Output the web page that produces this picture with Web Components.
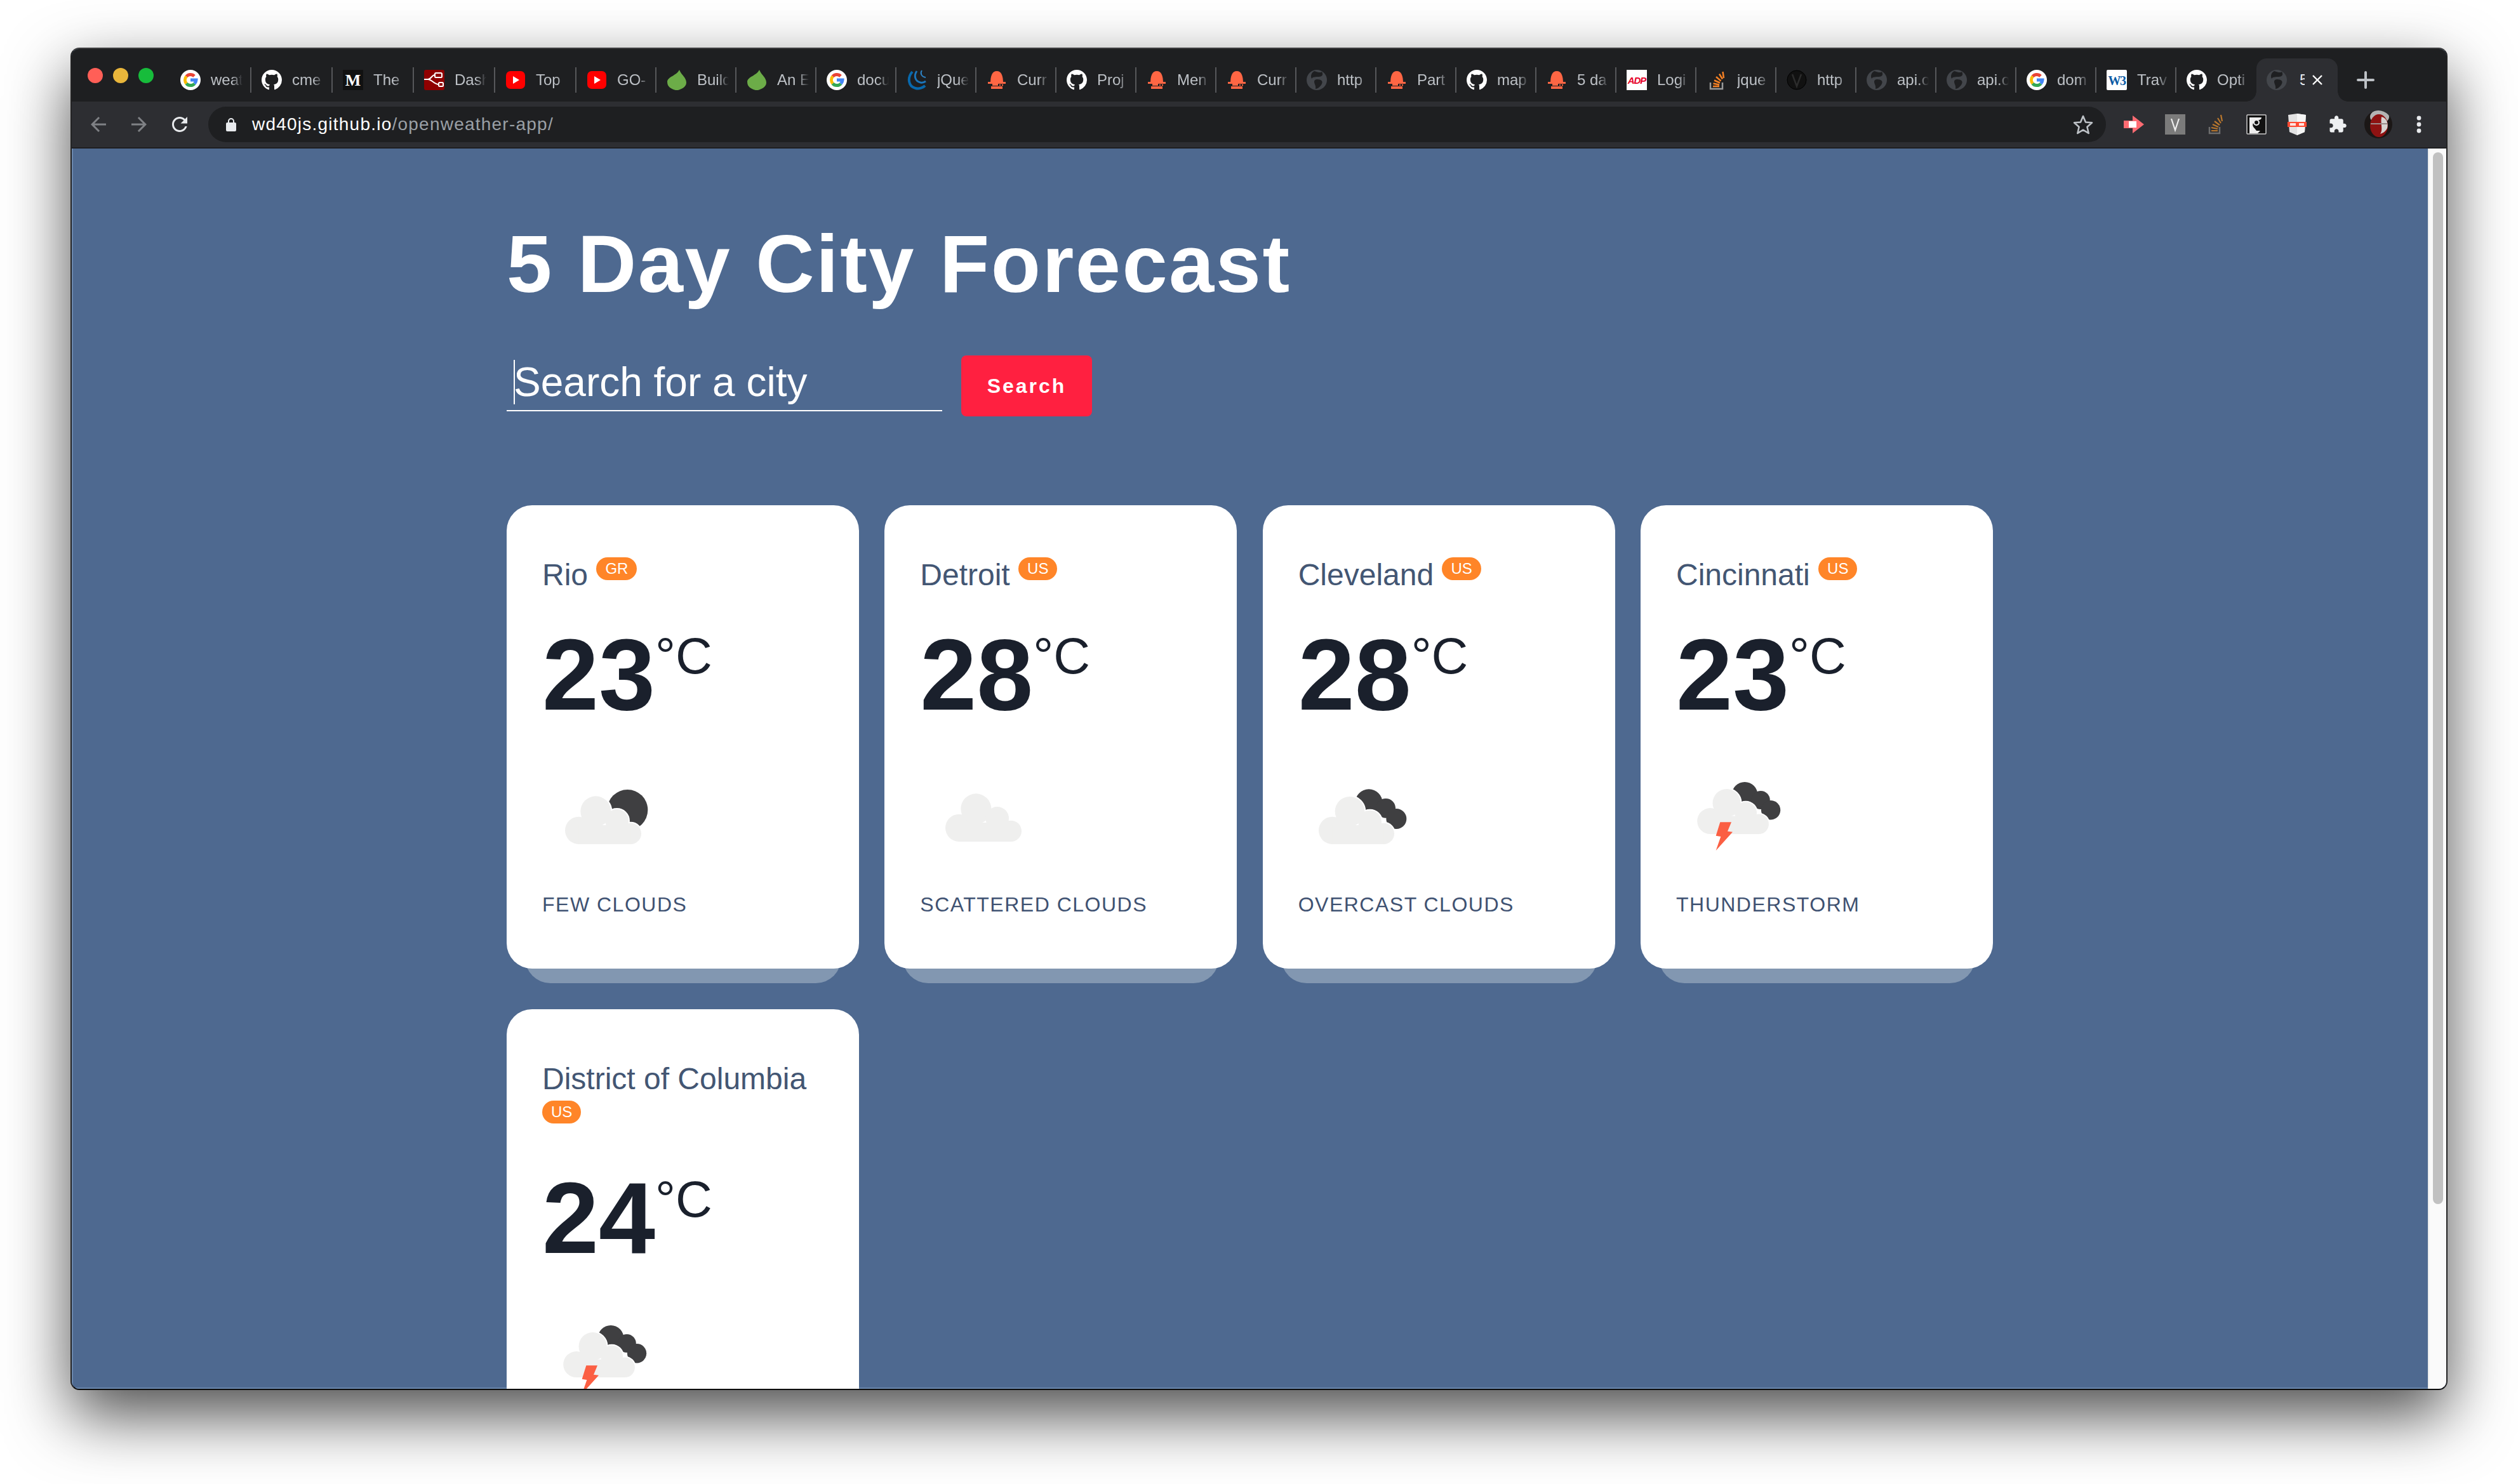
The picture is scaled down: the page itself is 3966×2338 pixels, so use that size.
<!DOCTYPE html>
<html>
<head>
<meta charset="utf-8">
<title>5 Day City Forecast</title>
<style>
  html, body { margin: 0; height: 100%; background: #fff; overflow: hidden; }
  body { padding: 75px 0 0 111px; box-sizing: border-box; font-family: "Liberation Sans", Arial, sans-serif; }
</style>
</head>
<body>
<browser-window>
  <tab-strip slot="tabs">
    <browser-tab wide icon="google">weat</browser-tab>
    <browser-tab wide icon="github">cme</browser-tab>
    <browser-tab wide icon="medium">The</browser-tab>
    <browser-tab wide icon="nodered">Dash</browser-tab>
    <browser-tab wide icon="youtube">Top</browser-tab>
    <browser-tab icon="youtube">GO-</browser-tab>
    <browser-tab icon="leaf">Build</browser-tab>
    <browser-tab icon="leaf">An E</browser-tab>
    <browser-tab icon="google">docu</browser-tab>
    <browser-tab icon="jquery">jQue</browser-tab>
    <browser-tab icon="helmet">Curr</browser-tab>
    <browser-tab icon="github">Proj</browser-tab>
    <browser-tab icon="helmet">Men</browser-tab>
    <browser-tab icon="helmet">Curr</browser-tab>
    <browser-tab icon="globe">http</browser-tab>
    <browser-tab icon="helmet">Part</browser-tab>
    <browser-tab icon="github">map</browser-tab>
    <browser-tab icon="helmet">5 da</browser-tab>
    <browser-tab icon="adp">Logi</browser-tab>
    <browser-tab icon="stack">jque</browser-tab>
    <browser-tab icon="vcircle">http</browser-tab>
    <browser-tab icon="globe">api.o</browser-tab>
    <browser-tab icon="globe">api.o</browser-tab>
    <browser-tab icon="google">dom</browser-tab>
    <browser-tab icon="w3">Trav</browser-tab>
    <browser-tab icon="github" nosep>Opti</browser-tab>
    <browser-tab active icon="globe">5 Day</browser-tab>
  </tab-strip>
  <browser-toolbar slot="toolbar" host-part="wd40js.github.io" path-part="/openweather-app/"></browser-toolbar>
  <forecast-page slot="page">
    <weather-card country="GR" temp="23" desc="FEW CLOUDS" icon="few">Rio</weather-card>
    <weather-card country="US" temp="28" desc="SCATTERED CLOUDS" icon="scattered">Detroit</weather-card>
    <weather-card country="US" temp="28" desc="OVERCAST CLOUDS" icon="overcast">Cleveland</weather-card>
    <weather-card country="US" temp="23" desc="THUNDERSTORM" icon="thunder">Cincinnati</weather-card>
    <weather-card country="US" temp="24" icon="thunder">District of Columbia</weather-card>
  </forecast-page>
</browser-window>

<script>
const GITHUB_PATH = "M8 0C3.58 0 0 3.58 0 8c0 3.54 2.29 6.53 5.47 7.59.4.07.55-.17.55-.38 0-.19-.01-.82-.01-1.49-2.01.37-2.53-.49-2.69-.94-.09-.23-.48-.94-.82-1.13-.28-.15-.68-.52-.01-.53.63-.01 1.08.58 1.23.82.72 1.21 1.87.87 2.33.66.07-.52.28-.87.51-1.07-1.78-.2-3.64-.89-3.64-3.95 0-.87.31-1.59.82-2.15-.08-.2-.36-1.02.08-2.12 0 0 .67-.21 2.2.82.64-.18 1.32-.27 2-.27.68 0 1.36.09 2 .27 1.53-1.04 2.2-.82 2.2-.82.44 1.1.16 1.92.08 2.12.51.56.82 1.27.82 2.15 0 3.07-1.87 3.75-3.65 3.95.29.25.54.73.54 1.48 0 1.07-.01 1.93-.01 2.2 0 .21.15.46.55.38A8.013 8.013 0 0016 8c0-4.42-3.58-8-8-8z";

const FAVICONS = {
  google: `<circle cx="16" cy="16" r="16" fill="#fff"/>
    <g fill="none" stroke-width="5">
      <path d="M9.6 10.4A8.5 8.5 0 0 1 22 10" stroke="#ea4335"/>
      <path d="M9.6 10.4A8.5 8.5 0 0 0 9.6 21.6" stroke="#fbbc05"/>
      <path d="M9.6 21.6A8.5 8.5 0 0 0 22.4 21.8" stroke="#34a853"/>
      <path d="M16 16H25A9 9 0 0 1 22.4 21.8" stroke="#4285f4"/>
    </g>`,
  github: `<svg viewBox="0 0 16 16" width="32" height="32"><path fill="#fff" d="${GITHUB_PATH}"/></svg>`,
  medium: `<rect width="32" height="32" fill="#111"/>
    <text x="16" y="25" text-anchor="middle" font-family="Liberation Serif, serif" font-weight="700" font-size="26" fill="#fff">M</text>`,
  nodered: `<rect width="32" height="32" rx="3" fill="#8f0000"/>
    <g fill="none" stroke="#fff" stroke-width="2">
      <rect x="17" y="5" width="11" height="7" rx="1.5"/><rect x="23" y="20" width="7" height="6" rx="1.5"/>
      <path d="M0 15H6C11 15 12 8 17 8M6 15C12 15 16 23 23 23"/>
    </g>`,
  youtube: `<rect x="1" y="2" width="30" height="28" rx="7" fill="#f00"/><path d="M12 10L22 16L12 22Z" fill="#fff"/>`,
  leaf: `<path d="M20 0C23 8 31 12 31 20C31 27 24 30 18 32L14 32C7 30 1 27 1 19C1 11 16 9 20 0Z" fill="#6cac48"/>`,
  jquery: `<g fill="none" stroke="#0868ac"><path d="M9 3C1 12 2 26 14 29C20 30.500 26 28 29 25" stroke-width="4"/><path d="M16 2C11 9 13 18 22 20C25 20.500 28 19.500 30 18" stroke-width="3" stroke="#1b75bb"/><path d="M24 1C21 5 23 11 30 12" stroke-width="2" stroke="#2d82c4"/></g>`,
  helmet: `<path d="M6 21C6 9 9 2 16 2C23 2 26 9 26 21Z" fill="#ff6644"/>
    <rect x="2" y="19" width="28" height="3" fill="#ff6644"/><rect x="9" y="22" width="9" height="3" fill="#ff6644"/>
    <rect x="20" y="23" width="2" height="2" fill="#ff6644"/><rect x="24" y="23" width="2" height="2" fill="#ff6644"/>
    <rect x="7" y="26" width="18" height="4" fill="#ff6644"/>`,
  globe: `<circle cx="16" cy="16" r="16" fill="#43464b"/>
    <path d="M12 2C18 4 22 5 24 3C27 8 24 11 19 11C15 11 9 11 8 14C6 10 7 5 12 2ZM17 15C23 15 26 18 24 22C22 26 18 30 14 30C15 25 12 22 12 19C12 16 14 15 17 15Z" fill="#1e1f21"/>`,
  adp: `<rect width="32" height="32" fill="#fff"/>
    <text x="16" y="22" text-anchor="middle" font-family="Liberation Sans, sans-serif" font-style="italic" font-weight="700" font-size="15" letter-spacing="-1" fill="#e60028">ADP</text>`,
  stack: `<path d="M6 20V30H25V20" fill="none" stroke="#9a9a9a" stroke-width="2.500"/>
    <g stroke="#f48024" stroke-width="2.500"><path d="M10 26H20M10.500 21.500L20 23.500M12 16.500L21 20.500M15 11L22.500 17.500M20 6.500L25 14.500M25.500 3L27 13"/></g>`,
  vcircle: `<circle cx="16" cy="16" r="15" fill="#111" stroke="#000"/>
    <path d="M9 7L16 26L23 7" fill="none" stroke="#2c2c2c" stroke-width="2.500"/>`,
  w3: `<rect width="32" height="32" rx="2" fill="#fff"/>
    <text x="16" y="24" text-anchor="middle" font-family="Liberation Serif, serif" font-weight="700" font-size="20" letter-spacing="-1.500" fill="#0a5aa4">W3</text>`,
};

class FavIcon extends HTMLElement {
  constructor() {
    super();
    this.attachShadow({ mode: "open" });
    const name = this.getAttribute("name");
    this.shadowRoot.innerHTML = `
      <style>
        :host { display: block; width: 32px; height: 32px; flex: none; }
        svg { display: block; }
      </style>
      <svg viewBox="0 0 32 32" width="32" height="32">${FAVICONS[name] || ""}</svg>
    `;
  }
}

class BrowserTab extends HTMLElement {
  constructor() {
    super();
    this.attachShadow({ mode: "open" });
    const active = this.hasAttribute("active");
    const width = active ? 128 : this.hasAttribute("wide") ? 128 : 126;
    const sep = active || this.hasAttribute("nosep") ? "transparent" : "#56575a";
    this.shadowRoot.innerHTML = `
      <style>
        :host {
          display: flex;
          align-items: center;
          flex: none;
          position: relative;
          width: ${width}px;
          height: 68px;
          box-sizing: border-box;
          ${active ? "background: #2d2e32; border-radius: 16px 16px 0 0;" : ""}
        }
        .inner {
          display: flex;
          align-items: center;
          width: 100%;
          height: 40px;
          box-sizing: border-box;
          padding-left: 16px;
          border-right: 2px solid ${sep};
        }
        .title {
          width: ${active ? 8 : 50}px;
          margin-left: ${active ? 20 : 16}px;
          overflow: hidden;
          white-space: nowrap;
          font-size: 24px;
          line-height: 32px;
          color: ${active ? "#e8eaed" : "#bdc1c6"};
          ${active ? "" : "-webkit-mask-image: linear-gradient(to right, #000 66%, transparent);"}
        }
        .close { margin-left: 12px; flex: none; }
        ${active ? `
        :host::before, :host::after {
          content: "";
          position: absolute;
          bottom: 0;
          width: 16px;
          height: 16px;
        }
        :host::before { left: -16px; background: radial-gradient(circle at 0 0, transparent 15.5px, #2d2e32 16px); }
        :host::after { right: -16px; background: radial-gradient(circle at 100% 0, transparent 15.5px, #2d2e32 16px); }
        ` : ""}
      </style>
      <div class="inner">
        <fav-icon name="${this.getAttribute("icon")}"></fav-icon>
        <div class="title"><slot></slot></div>
        ${active ? `<svg class="close" width="16" height="16" viewBox="0 0 16 16"><path d="M1 1L15 15M15 1L1 15" stroke="#fff" stroke-width="2.400"/></svg>` : ""}
      </div>
    `;
  }
}

class TabStrip extends HTMLElement {
  constructor() {
    super();
    this.attachShadow({ mode: "open" });
    this.shadowRoot.innerHTML = `
      <style>
        :host {
          display: flex;
          align-items: flex-end;
          height: 83px;
          background: #1e1f21;
        }
        .lights {
          display: flex;
          gap: 16px;
          align-self: flex-start;
          width: 130px;
          margin: 30px 0 0 25px;
        }
        .lights i { width: 24px; height: 24px; border-radius: 50%; }
        .plus { align-self: flex-end; margin: 0 0 16px 26px; flex: none; }
      </style>
      <div class="lights">
        <i style="background:#ff5f57"></i><i style="background:#e9b63b"></i><i style="background:#17bc3b"></i>
      </div>
      <slot></slot>
      <svg class="plus" width="36" height="36" viewBox="0 0 36 36"><path d="M18 6V30M6 18H30" stroke="#bdc1c6" stroke-width="4" stroke-linecap="round"/></svg>
    `;
  }
}

class BrowserToolbar extends HTMLElement {
  constructor() {
    super();
    this.attachShadow({ mode: "open" });
    this.shadowRoot.innerHTML = `
      <style>
        :host {
          display: flex;
          align-items: center;
          height: 72px;
          padding: 0 11px 0 10px;
          background: #2d2e32;
          border-bottom: 2px solid #1e1f21;
        }
        .slot64 { display: flex; align-items: center; justify-content: center; width: 64px; height: 56px; flex: none; }
        .address {
          display: flex;
          align-items: center;
          width: 2989px;
          height: 56px;
          margin: 0 13px;
          padding: 0 20px 0 28px;
          box-sizing: border-box;
          border-radius: 28px;
          background: #1e1f21;
          flex: none;
        }
        .address .url { margin-left: 25px; font-size: 28px; letter-spacing: 1.230px; color: #fff; white-space: nowrap; }
        .address .url span { color: #9aa0a6; }
        .address .star { margin-left: auto; }
        svg { display: block; }
      </style>
      <div class="slot64"><svg width="36" height="36" viewBox="0 0 24 24"><path fill="#7f8185" d="M20 11H7.830l5.590-5.590L12 4l-8 8 8 8 1.410-1.410L7.830 13H20v-2z"/></svg></div>
      <div class="slot64"><svg width="36" height="36" viewBox="0 0 24 24"><path fill="#7f8185" d="M12 4l-1.410 1.410L16.170 11H4v2h12.170l-5.580 5.590L12 20l8-8z"/></svg></div>
      <div class="slot64"><svg width="36" height="36" viewBox="0 0 24 24"><path fill="#e8eaed" d="M17.650 6.350C16.200 4.900 14.210 4 12 4c-4.420 0-7.990 3.580-7.990 8s3.570 8 7.990 8c3.730 0 6.840-2.550 7.730-6h-2.080c-.820 2.330-3.040 4-5.650 4-3.310 0-6-2.690-6-6s2.690-6 6-6c1.660 0 3.140.690 4.220 1.780L13 11h7V4l-2.350 2.350z"/></svg></div>
      <div class="address">
        <svg width="16" height="22" viewBox="0 0 16 22"><path d="M4 9V6a4 4 0 0 1 8 0v3" fill="none" stroke="#e8eaed" stroke-width="2"/><rect y="8" width="16" height="14" rx="2" fill="#e8eaed"/></svg>
        <div class="url">${this.getAttribute("host-part")}<span>${this.getAttribute("path-part")}</span></div>
        <svg class="star" width="32" height="32" viewBox="0 0 32 32"><path d="M16 3L20 12.500L30 13.300L22.400 20L24.700 30L16 24.700L7.300 30L9.600 20L2 13.300L12 12.500Z" fill="none" stroke="#bdc1c6" stroke-width="2.600" stroke-linejoin="round"/></svg>
      </div>
      <div class="slot64"><svg width="34" height="28" viewBox="0 0 34 28"><path d="M0 8H14V0L32 14L14 28V20H0Z" fill="#ff6b72"/><rect x="8" y="9" width="12" height="10" fill="#fff"/></svg></div>
      <div class="slot64"><svg width="32" height="32" viewBox="0 0 32 32"><rect width="32" height="32" fill="#7b7b7b"/><path d="M10 7L16 25L22 7" fill="none" stroke="#eee" stroke-width="2.200"/></svg></div>
      <div class="slot64"><svg width="24" height="32" viewBox="0 0 24 32"><path d="M2 20V30H18V20" fill="none" stroke="#6d6d6d" stroke-width="2.500"/><g stroke="#b9772d" stroke-width="2.200"><path d="M5 26H15M5 21L15 23M7 16L16 20M10 11L18 17M15 6L20 14M20 1L22 11"/></g></svg></div>
      <div class="slot64"><svg width="32" height="32" viewBox="0 0 32 32"><rect x="1" y="1" width="30" height="30" rx="1" fill="#111" stroke="#ccc" stroke-width="1.500"/><path d="M5 5H24C24 11 14 8 11 14C8 19 14 22 16 26L22 26L18 30H5Z" fill="#eee"/><circle cx="16" cy="13" r="4" fill="#111" stroke="#eee" stroke-width="2"/></svg></div>
      <div class="slot64"><svg width="30" height="34" viewBox="0 0 30 34"><path d="M1 2L15 0L29 2L27 29L15 34L3 29Z" fill="#e2e2e2"/><path d="M15 0L29 2L27 29L15 34Z" fill="#f5f5f5"/><rect y="13" width="30" height="8" fill="#ff4b33"/><rect x="4" y="15" width="9" height="4" fill="#fff" opacity=".85"/><rect x="18" y="15" width="8" height="4" fill="#fff" opacity=".85"/></svg></div>
      <div class="slot64"><svg width="30" height="30" viewBox="0 0 24 24"><path fill="#eef0f2" d="M20.500 11H19V7c0-1.100-.900-2-2-2h-4V3.500C13 2.120 11.880 1 10.500 1S8 2.120 8 3.500V5H4c-1.100 0-1.990.900-1.990 2v3.800H3.500c1.490 0 2.700 1.210 2.700 2.700s-1.210 2.700-2.700 2.700H2V20c0 1.100.900 2 2 2h3.800v-1.500c0-1.490 1.210-2.700 2.700-2.700 1.490 0 2.700 1.210 2.700 2.700V22H17c1.100 0 2-.900 2-2v-4h1.500c1.380 0 2.500-1.120 2.500-2.500S21.880 11 20.500 11z"/></svg></div>
      <div class="slot64"><svg width="44" height="44" viewBox="0 0 44 44"><defs><clipPath id="av"><circle cx="22" cy="22" r="22"/></clipPath></defs><g clip-path="url(#av)"><rect width="44" height="44" fill="#1b1716"/><ellipse cx="24" cy="10" rx="15" ry="11" fill="#b4b4b4"/><ellipse cx="23" cy="24" rx="14" ry="18" fill="#8e1212"/><path d="M27 10C36 12 38 22 36 28C33 34 28 36 25 37C30 30 25 22 27 10Z" fill="#d8d4d2"/><path d="M10 21H36" stroke="#9b8a8a" stroke-width="2"/></g></svg></div>
      <div class="slot64"><svg width="8" height="28" viewBox="0 0 8 28"><circle cx="4" cy="4" r="3.400" fill="#e8eaed"/><circle cx="4" cy="14" r="3.400" fill="#e8eaed"/><circle cx="4" cy="24" r="3.400" fill="#e8eaed"/></svg></div>
    `;
  }
}

class BrowserWindow extends HTMLElement {
  constructor() {
    super();
    this.attachShadow({ mode: "open" });
    this.shadowRoot.innerHTML = `
      <style>
        :host {
          display: flex;
          flex-direction: column;
          width: 3744px;
          height: 2115px;
          box-sizing: border-box;
          border: 2px solid;
          border-color: #3d3d3f #232324 #0c0c0c #232324;
          border-radius: 14px;
          overflow: hidden;
          background: #4e6990;
          box-shadow: 0 40px 100px rgba(0, 0, 0, 0.7);
        }
        .page { display: flex; flex: 1; min-height: 0; }
        .view {
          flex: 1;
          min-width: 0;
          overflow: hidden;
          box-shadow: inset 0 -2px 0 #6a87ad, inset 2px 0 0 #6a87ad;
        }
        .track {
          flex: none;
          width: 29px;
          box-sizing: border-box;
          padding: 6px 5px 0 6px;
          background: #fafafa;
          border-left: 2px solid #ececec;
        }
        .thumb { height: 1657px; border-radius: 8px; background: #c1c1c1; }
      </style>
      <slot name="tabs"></slot>
      <slot name="toolbar"></slot>
      <div class="page">
        <div class="view"><slot name="page"></slot></div>
        <div class="track"><div class="thumb"></div></div>
      </div>
    `;
  }
}

class ForecastPage extends HTMLElement {
  constructor() {
    super();
    this.attachShadow({ mode: "open" });
    this.shadowRoot.innerHTML = `
      <style>
        :host {
          display: block;
          padding: 118px 0 0 685px;
          color: #fff;
          font-family: "Liberation Sans", Arial, sans-serif;
        }
        h1 {
          margin: 0 0 80px;
          font-size: 128px;
          line-height: 128px;
          font-weight: 700;
          letter-spacing: 2.500px;
        }
        .search { display: flex; align-items: flex-start; gap: 30px; }
        .field {
          display: flex;
          width: 686px;
          height: 88px;
          box-sizing: border-box;
          padding: 7px 0 0 11px;
          border-bottom: 2px solid #fff;
          font-size: 64px;
          line-height: 70px;
        }
        .caret { width: 1.500px; height: 70px; background: #fff; flex: none; margin-right: -1.500px; }
        button {
          width: 206px;
          height: 96px;
          padding: 0;
          border: 0;
          border-radius: 8px;
          background: #ff2040;
          color: #fff;
          font: 700 32px "Liberation Sans", Arial, sans-serif;
          letter-spacing: 3px;
        }
        .grid {
          display: grid;
          grid-template-columns: repeat(4, 555px);
          column-gap: 40.330px;
          row-gap: 64px;
          margin-top: 140px;
        }
      </style>
      <h1>5 Day City Forecast</h1>
      <div class="search">
        <div class="field"><span class="caret"></span><span>Search for a city</span></div>
        <button>Search</button>
      </div>
      <div class="grid"><slot></slot></div>
    `;
  }
}

class WeatherIcon extends HTMLElement {
  constructor() {
    super();
    this.attachShadow({ mode: "open" });
    const kind = this.getAttribute("kind");
    const lobes = (list, rect) =>
      list.map((c) => `<circle cx="${c[0]}" cy="${c[1]}" r="${c[2]}"/>`).join("") +
      `<rect x="${rect[0]}" y="${rect[1]}" width="${rect[2]}" height="${rect[3]}"/>`;
    const wide = kind === "few" || kind === "scattered";
    const cloud = wide
      ? lobes([[215, 325, 65], [295, 235, 72], [395, 280, 55], [460, 340, 50]], [215, 300, 245, 90])
      : lobes([[203, 325, 65], [285, 235, 70], [380, 285, 55], [445, 340, 50]], [203, 300, 242, 90]);
    let dark = "";
    if (kind === "few") dark = `<circle cx="445" cy="228" r="96"/>`;
    if (kind === "overcast" || kind === "thunder") {
      dark = `<circle cx="375" cy="195" r="65"/><circle cx="455" cy="220" r="46"/><circle cx="505" cy="270" r="48"/>`;
    }
    const shift = kind === "scattered" ? "translate(12 -12)" : kind === "thunder" ? "translate(11 -27) scale(.947)" : "";
    const bolt = kind === "thunder"
      ? `<path d="M250 286H303L285 329L309 332L230 420L253 354L230 350Z" fill="#fb5f43"/>`
      : "";
    this.shadowRoot.innerHTML = `
      <style>
        :host { display: block; width: 240px; height: 160px; margin-left: 42px; }
        svg { display: block; }
      </style>
      <svg width="240" height="160" viewBox="0 0 720 480">
        <g transform="${shift}">
          <g fill="#3f3f41">${dark}</g>
          <g fill="#fff" stroke="#fff" stroke-width="12">${cloud}</g>
          <g fill="#efefee">${cloud}</g>
        </g>
        ${bolt}
      </svg>
    `;
  }
}

class WeatherCard extends HTMLElement {
  constructor() {
    super();
    this.attachShadow({ mode: "open" });
    const desc = this.getAttribute("desc");
    this.shadowRoot.innerHTML = `
      <style>
        :host { display: flex; position: relative; z-index: 0; }
        .card {
          position: relative;
          flex: 1;
          min-height: 730px;
          box-sizing: border-box;
          padding: 79px 56px 81px 0;
          border-radius: 40px;
          background: #fff;
        }
        .card::after {
          content: "";
          position: absolute;
          left: 29px;
          right: 28px;
          bottom: -23px;
          height: 90px;
          border-radius: 40px;
          background: #8297b1;
          z-index: -1;
        }
        .city {
          margin-left: 56px;
          font-size: 48px;
          line-height: 62px;
          color: #435673;
        }
        .badge {
          display: inline-block;
          vertical-align: 18px;
          height: 36px;
          padding: 0 14px;
          border-radius: 18px;
          background: #ff8528;
          color: #fff;
          font-size: 24px;
          line-height: 36px;
        }
        .temp {
          margin: 46px 0 57px 56px;
          font-size: 160px;
          line-height: 160px;
          font-weight: 700;
          color: #1a202c;
        }
        .temp sup {
          font-size: 80px;
          font-weight: 400;
          line-height: 0;
          vertical-align: 57px;
        }
        .desc {
          margin: 45px 0 0 56px;
          font-size: 32px;
          line-height: 40px;
          letter-spacing: 1.500px;
          color: #3f5272;
        }
      </style>
      <div class="card">
        <div class="city"><slot></slot> <span class="badge">${this.getAttribute("country")}</span></div>
        <div class="temp">${this.getAttribute("temp")}<sup>°C</sup></div>
        <weather-icon kind="${this.getAttribute("icon")}"></weather-icon>
        ${desc ? `<div class="desc">${desc}</div>` : ""}
      </div>
    `;
  }
}

customElements.define("fav-icon", FavIcon);
customElements.define("browser-tab", BrowserTab);
customElements.define("tab-strip", TabStrip);
customElements.define("browser-toolbar", BrowserToolbar);
customElements.define("browser-window", BrowserWindow);
customElements.define("forecast-page", ForecastPage);
customElements.define("weather-icon", WeatherIcon);
customElements.define("weather-card", WeatherCard);
</script>
</body>
</html>
